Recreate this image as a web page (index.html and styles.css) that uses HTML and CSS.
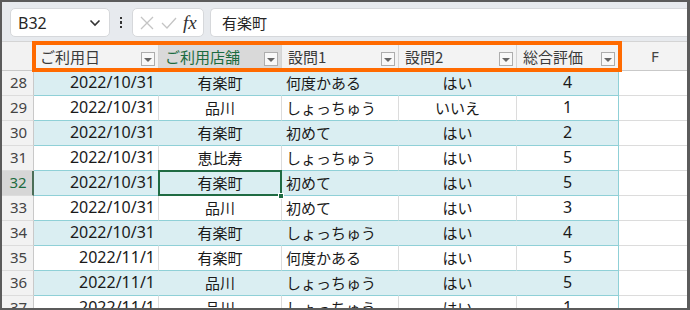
FILE: index.html
```html
<!DOCTYPE html>
<html lang="ja">
<head>
<meta charset="utf-8">
<link rel="stylesheet" href="styles.css">
</head>
<body>
<div class="frame">
  <div class="fbar">
    <div class="namebox">
      <span class="ref">B32</span>
      <svg class="chev" width="12" height="8" viewBox="0 0 12 8"><path d="M1.5 1.5 L6 6 L10.5 1.5" fill="none" stroke="#333" stroke-width="1.6"/></svg>
    </div>
    <div class="dots"><i></i><i></i><i></i></div>
    <div class="btns">
      <svg width="16" height="16" viewBox="0 0 16 16"><path d="M2 2 L14 14 M14 2 L2 14" stroke="#c4c4c4" stroke-width="1.3" fill="none"/></svg>
      <svg width="18" height="16" viewBox="0 0 18 16"><path d="M2 8 L7 13 L16 3" stroke="#c4c4c4" stroke-width="1.3" fill="none"/></svg>
      <span class="fx">fx</span>
    </div>
    <div class="finput">有楽町</div>
  </div>
  <div class="sheet">
    <div class="row hdr">
      <div class="rh corner"></div>
      <div class="ch"><span>ご利用日</span><b class="dd"></b></div>
      <div class="ch sel"><span>ご利用店舗</span><b class="dd"></b></div>
      <div class="ch"><span>設問1</span><b class="dd"></b></div>
      <div class="ch"><span>設問2</span><b class="dd"></b></div>
      <div class="ch"><span>総合評価</span><b class="dd"></b></div>
      <div class="ch f">F</div>
      <div class="hilite"></div>
    </div>
    <div class="row band"><div class="rh">28</div><div class="c r">2022/10/31</div><div class="c m">有楽町</div><div class="c l">何度かある</div><div class="c m">はい</div><div class="c m e">4</div><div class="c x"></div></div>
    <div class="row"><div class="rh">29</div><div class="c r">2022/10/31</div><div class="c m">品川</div><div class="c l">しょっちゅう</div><div class="c m">いいえ</div><div class="c m e">1</div><div class="c x"></div></div>
    <div class="row band"><div class="rh">30</div><div class="c r">2022/10/31</div><div class="c m">有楽町</div><div class="c l">初めて</div><div class="c m">はい</div><div class="c m e">2</div><div class="c x"></div></div>
    <div class="row"><div class="rh">31</div><div class="c r">2022/10/31</div><div class="c m">恵比寿</div><div class="c l">しょっちゅう</div><div class="c m">はい</div><div class="c m e">5</div><div class="c x"></div></div>
    <div class="row band"><div class="rh cur">32</div><div class="c r">2022/10/31</div><div class="c m active">有楽町<i class="handle"></i></div><div class="c l">初めて</div><div class="c m">はい</div><div class="c m e">5</div><div class="c x"></div></div>
    <div class="row"><div class="rh">33</div><div class="c r">2022/10/31</div><div class="c m">品川</div><div class="c l">初めて</div><div class="c m">はい</div><div class="c m e">3</div><div class="c x"></div></div>
    <div class="row band"><div class="rh">34</div><div class="c r">2022/10/31</div><div class="c m">有楽町</div><div class="c l">しょっちゅう</div><div class="c m">はい</div><div class="c m e">4</div><div class="c x"></div></div>
    <div class="row"><div class="rh">35</div><div class="c r">2022/11/1</div><div class="c m">有楽町</div><div class="c l">何度かある</div><div class="c m">はい</div><div class="c m e">5</div><div class="c x"></div></div>
    <div class="row band"><div class="rh">36</div><div class="c r">2022/11/1</div><div class="c m">品川</div><div class="c l">しょっちゅう</div><div class="c m">はい</div><div class="c m e">5</div><div class="c x"></div></div>
    <div class="row"><div class="rh">37</div><div class="c r">2022/11/1</div><div class="c m">品川</div><div class="c l">しょっちゅう</div><div class="c m">はい</div><div class="c m e">1</div><div class="c x"></div></div>
  </div>
</div>
</body>
</html>
```
FILE: styles.css
```css
* { box-sizing: border-box; margin: 0; padding: 0; }
html, body { width: 690px; height: 310px; overflow: hidden; background: #fff; }
body { font-family: "Noto Sans", "Noto Sans CJK JP", sans-serif; font-size: 15px; color: #1a1a1a; }

.frame {
  width: 690px; height: 310px; overflow: hidden;
  border: 2px solid #5b5b5b; border-right-width: 3px;
  display: flex; flex-direction: column;
  background: #fff;
}

.fbar {
  height: 39px; flex: none;
  background: #e7eaee;
  display: flex; align-items: flex-start;
  padding: 6px 0 0 8px;
}
.namebox {
  width: 100px; height: 29px;
  background: #fff; border: 1px solid #d6d8db; border-radius: 5px;
  display: flex; align-items: center; justify-content: space-between;
  padding: 0 8px 0 7px;
}
.ref { font-size: 16px; color: #262626; font-family: "Noto Sans", "Liberation Sans", sans-serif; }
.dots { width: 22px; height: 29px; display: flex; flex-direction: column; align-items: center; justify-content: center; gap: 2px; }
.dots i { display: block; width: 2.5px; height: 2.5px; background: #333; }
.btns {
  width: 72px; height: 29px;
  background: #fff; border: 1px solid #d6d8db; border-radius: 5px;
  display: flex; align-items: center; padding: 0 0 0 6px; gap: 5px;
}
.fx { font-family: "Liberation Serif", "DejaVu Serif", serif; font-style: italic; font-size: 19px; color: #333; margin-left: 0; }
.finput {
  flex: 1; height: 29px; margin-left: 6px;
  background: #fff; border: 1px solid #d6d8db; border-right: none; border-radius: 5px 0 0 5px;
  padding: 0 0 0 11px; line-height: 27px; color: #262626;
  font-family: "Noto Sans CJK JP", sans-serif;
}

.sheet { flex: 1; border-top: 1px solid #d4d4d4; position: relative; }

.row {
  display: grid;
  grid-template-columns: 32px 125px 123px 117px 118px 102px 1fr;
  height: 25px;
}
.row.hdr { height: 29px; position: relative; background: #f3f3f3; }

.rh {
  background: #f2f2f2; color: #444;
  border-right: 1px solid #c9c9c9; border-bottom: 1px solid #dcdcdc;
  display: flex; align-items: center; justify-content: center;
  font-size: 15px; padding: 0 0 2px 2px;
}
.rh.corner { border-bottom: 1px solid #c9c9c9; }
.rh.cur { background: #d6d6d6; color: #1c6b40; border-right: 2px solid #4b6e58; }

.ch {
  display: flex; align-items: center; justify-content: space-between;
  padding: 0 3px 0 6px;
  border-right: 1px solid #d4d4d4; border-bottom: 1px solid #c9c9c9;
  color: #3a3a3a; background: #f3f3f3;
  font-family: "Noto Sans CJK JP", sans-serif;
}
.ch span { padding-top: 1px; }
.ch.sel { background: #d9d9d9; color: #1b6b40; }
.ch.f { justify-content: center; padding: 0 0 0 4px; font-family: "Noto Sans", sans-serif; color: #444; border-right: none; }
.dd {
  width: 14px; height: 14px; align-self: flex-end; margin-bottom: 4px;
  border: 1px solid #adadad; background: #f8f8f8;
  display: flex; align-items: center; justify-content: center;
}
.dd::after {
  content: ""; width: 0; height: 0;
  border-left: 4px solid transparent; border-right: 4px solid transparent; border-top: 4px solid #666;
  margin-top: 2px;
}
.hilite {
  position: absolute; left: 30px; top: -1px; width: 590px; height: 31px;
  border: 4px solid #ff6a00;
}

.c {
  display: flex; align-items: center;
  border-bottom: 1px solid #8fd0d7; border-right: 1px solid #dcdcdc;
  white-space: nowrap; padding-bottom: 2px;
}
.row.band .c { background: #daeef2; border-right-color: #daeef2; }
.c.r { justify-content: flex-end; padding-right: 3px; font-size: 16px; }
.c.m { justify-content: center; }
.c.e { font-size: 16px; }
.c.l { padding-left: 4px; }
.c.e { border-right: 1px solid #8fd0d7 !important; }
.c.x { background: #fff !important; border-bottom-color: #dcdcdc; border-right: none; }

.active { position: relative; }
.active::after {
  content: ""; position: absolute; left: -1px; top: -1px; right: -1px; bottom: -1px;
  border: 2px solid #1f6b43;
}
.handle {
  position: absolute; right: -3px; bottom: -4px; width: 6px; height: 6px;
  background: #1f6b43; border: 1px solid #fff; z-index: 2;
}
```
